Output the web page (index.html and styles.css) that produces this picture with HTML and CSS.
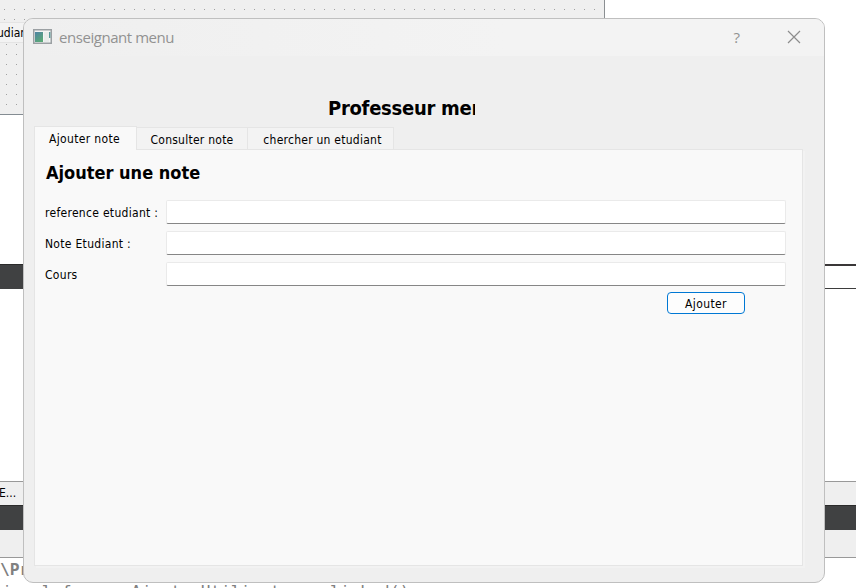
FILE: index.html
```html
<!DOCTYPE html>
<html lang="fr">
<head>
<meta charset="utf-8">
<title>enseignant menu</title>
<link rel="stylesheet" href="styles.css">
</head>
<body>
<div class="desktop">
  <div class="form-canvas"><div class="dots dots-top"></div><div class="dots dots-low"></div></div>
  <div class="back-label">udiant</div>
  <div class="stripe stripe-header"></div>
  <div class="stripe-cell"></div>
  <div class="pane pane-top"><span>E...</span></div>
  <div class="stripe stripe-bottom"></div>
  <div class="pane pane-low"></div>
  <div class="code-title">\Projet</div>
  <div class="code-line">ignal from a AjouterUtilisateur_clicked()</div>

  <main class="dialog">
    <header class="titlebar">
      <svg class="app-icon" width="19" height="16" viewBox="0 0 19 16">
        <defs><linearGradient id="g" x1="0" y1="0" x2="0.6" y2="1"><stop offset="0" stop-color="#4f83a4"/><stop offset="1" stop-color="#5aa878"/></linearGradient></defs>
        <rect x=".75" y=".75" width="17.5" height="13.5" fill="#f4f5f5" stroke="#9ba0a3" stroke-width="1.5"/>
        <rect x="2" y="3" width="8" height="10" fill="url(#g)"/>
        <rect x="11" y="3" width="5" height="10" fill="#e9eceb"/>
        <rect x="16" y="3" width="1.4" height="6" fill="#5b9a9a"/>
      </svg>
      <span class="title">enseignant menu</span>
      <span class="help">?</span>
      <svg class="close" width="14" height="14" viewBox="0 0 14 14"><path d="M1 1L13 13M13 1L1 13" stroke="#8c8c8c" stroke-width="1.2"/></svg>
    </header>
    <h1 class="heading">Professeur menu</h1>
    <nav class="tabs">
      <span class="tab active"><b>Ajouter note</b></span>
      <span class="tab t2"><b>Consulter note</b></span>
      <span class="tab t3"><b>chercher un etudiant</b></span>
    </nav>
    <section class="panel">
      <h2>Ajouter une note</h2>
      <form class="fields">
        <label for="ref">reference etudiant :</label><input id="ref">
        <label for="note">Note Etudiant :</label><input id="note">
        <label for="cours">Cours</label><input id="cours">
      </form>
      <button class="add" type="button">Ajouter</button>
    </section>
  </main>
</div>
</body>
</html>
```
FILE: styles.css
```css
* { box-sizing: border-box; }
body { margin: 0; font: 12px "DejaVu Sans Condensed", "DejaVu Sans", sans-serif; font-stretch: condensed; color: #000; }
.desktop { position: relative; width: 856px; height: 588px; overflow: hidden; background: #fff; }
.form-canvas {
  position: absolute; left: 0; top: 0; width: 605px; height: 115px; background: #efefef;
  border-right: 1px solid #8b8f92; border-bottom: 1px solid #848c92;
}
.dots { background: conic-gradient(from 0deg at 1px 1px, transparent 270deg, #a0a0a0 0) 0 0 / 10px 10px; }
.dots-top { height: 22px; background-position: 4px 9px; }
.dots-low { height: 90px; background-position: 6px 2px; }
.back-label { position: absolute; left: -3px; top: 22px; width: 40px; height: 21px; line-height: 21px; background: #f3f3f3; border-top: 1px solid #e4e4e4; border-bottom: 1px solid #e4e4e4; }
.stripe { position: absolute; left: 0; height: 25px; background: #404142; border-top: 1px solid #2b2b2b; }
.stripe-header { top: 264px; width: 30px; }
.stripe-bottom { top: 505px; width: 856px; }
.stripe-cell { position: absolute; left: 820px; top: 264px; width: 40px; height: 25px; border-top: 2px solid #3a3738; border-bottom: 1px solid #3d3d3d; }
.pane { position: absolute; left: 0; width: 856px; background: #efefef; }
.pane-top { top: 481px; height: 24px; border-top: 1px solid #999; line-height: 22px; }
.pane-top span { margin-left: -1px; }
.pane-low { top: 530px; height: 28px; border-bottom: 1px solid #999; }
.code-title, .code-line { position: absolute; left: 0; font-family: "DejaVu Sans Mono", monospace; color: #808080; white-space: pre; }
.code-title { top: 560px; font-size: 16.3px; font-weight: bold; }
.code-line { top: 582px; left: 2px; font-size: 16.3px; letter-spacing: .14px; }

.dialog {
  position: absolute; left: 23px; top: 18px; width: 802px; height: 565px;
  background: #efefef; border: 1px solid #bfbfbf; border-radius: 10px; overflow: hidden;
  display: flex; flex-direction: column;
}
.titlebar { height: 37px; flex: none; display: flex; align-items: center; background: linear-gradient(90deg, #efefef, #f3f3f3 60%); padding: 0 23px 2px 9px; color: #929292; }
.title { margin-left: 7px; font: 15px "Open Sans", sans-serif; letter-spacing: -.45px; }
.help { margin-left: auto; font: 15px "Open Sans", sans-serif; margin-right: 47px; }
.heading { margin: 36px 0 0 304px; width: 147px; height: 33px; line-height: 33px; overflow: hidden; white-space: nowrap; font-size: 20px; letter-spacing: -.27px; }
.tabs { display: flex; align-items: flex-end; height: 24px; margin-left: 10px; flex: none; position: relative; z-index: 1; }
.tab { height: 22px; border: 1px solid #e5e5e5; border-left: 0; border-bottom: 0; background: #f3f3f3; display: flex; align-items: center; justify-content: center; padding-top: 2px; }
.tab b { font-weight: normal; white-space: nowrap; letter-spacing: .25px; }
.tab.active { width: 103px; height: 24px; margin-bottom: -1px; border-left: 1px solid #e5e5e5; background: #f9f9f9; padding: 1px 2px 0 0; }
.tab.active b { letter-spacing: .35px; }
.t2 { width: 111px; }
.t3 { width: 146px; padding-left: 4px; }
.panel { margin: 0 21px 0 10px; height: 417px; flex: none; border: 1px solid #e5e5e5; background: #f9f9f9; padding: 0 16px 0 10px; box-shadow: 2px 2px #f2f2f2; }
.panel h2 { margin: 11px 0 16px 1px; font-size: 18px; line-height: 23px; }
.fields { display: grid; grid-template-columns: 121px 1fr; row-gap: 7px; align-items: center; margin: 0; }
.fields label { white-space: nowrap; letter-spacing: .3px; padding-top: 1px; }
.fields input { height: 24px; width: 100%; margin: 0; border: 1px solid #eaeaea; border-bottom-color: #868686; border-radius: 2px; background: #fff; }
.add { display: block; margin: 6px 0 0 622px; width: 78px; height: 22px; padding: 1px 0 0; border: 1px solid #0078d4; border-radius: 4px; background: #fdfdfd; font: inherit; letter-spacing: .4px; color: #000; }
```
